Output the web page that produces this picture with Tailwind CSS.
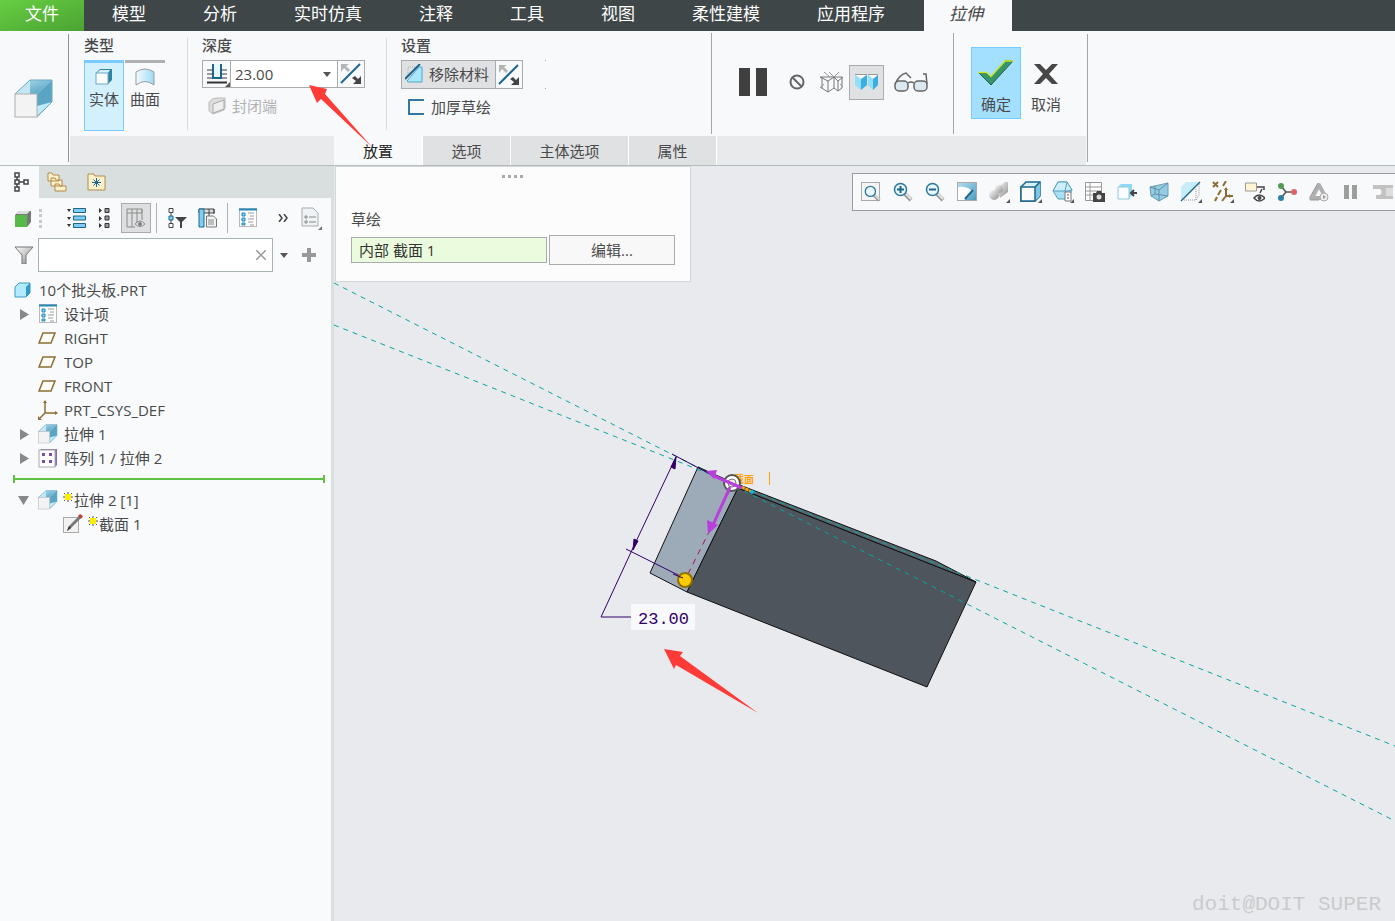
<!DOCTYPE html>
<html lang="zh-CN">
<head>
  <meta charset="UTF-8" />
  <meta name="viewport" content="width=device-width, initial-scale=1.0" />
  <title>10个批头板.PRT - 拉伸</title>
  <script src="https://cdn.jsdelivr.net/npm/@tailwindcss/browser@4"></script>
</head>
<body class="min-h-screen flex flex-col relative overflow-x-hidden bg-[#e9eaee] text-[15px] leading-5 text-[#4a4a4a] font-['Open_Sans','Noto_Sans_CJK_SC',sans-serif]">

  <!-- shared icons -->
  <svg class="absolute w-0 h-0">
    <defs>
      <linearGradient id="sky" x1="0" y1="0" x2="1" y2="1"><stop offset="0" stop-color="#b5e0f2" /><stop offset="1" stop-color="#4a9bbd" /></linearGradient>
      <linearGradient id="pale" x1="0" y1="0" x2="1" y2="0"><stop offset="0" stop-color="#f4fbfe" /><stop offset="1" stop-color="#9ddcf5" /></linearGradient>
      <linearGradient id="grey" x1="0" y1="0" x2="1" y2="1"><stop offset="0" stop-color="#ffffff" /><stop offset="1" stop-color="#8d8d8d" /></linearGradient>
    </defs>
    <symbol id="extrude" viewBox="0 0 40 40">
      <path d="M1 15 16 1h22L23 15z" fill="url(#sky)" />
      <path d="M16 1 1 15h15z" fill="#c5e6f3" />
      <path d="M38 1v22L23 38V15z" fill="#5ba5c4" />
      <path d="m23 37 15-14-15 4z" fill="#bfeaf9" />
      <path d="M1 15 16 1h22v22L23 38" fill="none" stroke="#6fa9c2" />
      <rect x="1" y="15" width="22" height="23" fill="#f3f3f3" stroke="#b0b0b0" />
    </symbol>
    <symbol id="flip" viewBox="0 0 22 22">
      <path d="M1 1h8L6 3l4 4-2 2-4-4-3 4z" fill="#b4b4b4" />
      <path d="M21 21h-8l3-3-4-3 3-2 3 3 3-3z" fill="#444" />
      <path d="M1 20 20 1" stroke="#1c668c" stroke-width="2" />
    </symbol>
    <symbol id="design" viewBox="0 0 18 20">
      <rect x=".5" y=".5" width="17" height="18" fill="#fff" stroke="#b9b9b9" />
      <path d="M0 1.500h18" stroke="#2389b8" stroke-width="2" />
      <path d="M3 5h3v3H3zM3 10h3v3H3zM3 15h3v2H3z" fill="#7ed0f5" stroke="#2389b8" />
      <path d="M9 5h6M11 8h4M9 11h6M9 14h5M11 17h4" stroke="#9a9a9a" />
    </symbol>
    <symbol id="plane" viewBox="0 0 18 12"><path d="M5 1h12l-4 10H1z" fill="#fffdf8" stroke="#8c6d35" stroke-width="1.500" /></symbol>
    <symbol id="spark" viewBox="0 0 10 10">
      <path d="M1 1l8 8M9 1 1 9M5 0v10M0 5h10" stroke="#555" /><rect x="2" y="2" width="6" height="6" fill="#ffee00" />
    </symbol>
    <symbol id="lens" viewBox="0 0 20 20">
      <path d="m12 12 6 6" stroke="#9c9c9c" stroke-width="4" /><path d="m13 12 5 5" stroke="#e6e6e6" stroke-width="2" />
      <circle cx="7.500" cy="7.500" r="6" fill="#e8f7fd" stroke="#2b7797" stroke-width="1.500" />
    </symbol>
    <symbol id="corner" viewBox="0 0 4 4"><path d="M4 0v4H0z" fill="#555" /></symbol>
  </svg>

  <nav class="flex h-[31px] bg-[#3e4647] text-[17px] leading-[27px] text-white">
    <a href="#" class="w-[84px] text-center bg-gradient-to-br from-[#67cf43] to-[#4ba332]">文件</a>
    <div class="flex gap-[57px] pl-7">
      <a href="#">模型</a><a href="#">分析</a><a href="#">实时仿真</a><a href="#">注释</a><a href="#">工具</a><a href="#">视图</a><a href="#">柔性建模</a><a href="#">应用程序</a>
    </div>
    <a href="#" class="ml-[39px] w-[88px] pr-1 text-center italic bg-[#f8f9fb] text-[#444]">拉伸</a>
  </nav>

  <header class="flex h-[135px] bg-[#f8f9fb] border-b border-[#b3bdbf]">
    <div class="w-[68px] pt-12 pl-[14px]"><svg class="size-10"><use href="#extrude" /></svg></div>
    <div class="w-px my-[3px] bg-[#8e9596]"></div>
    <div class="w-[1018px] flex flex-col">
      <div class="flex h-[105px]">
        <section class="w-[118px] pl-[15px] pt-1">
          <h2 class="font-medium h-[25px] leading-5">类型</h2>
          <div class="flex gap-px">
            <button class="w-10 h-[71px] pt-[5px] flex flex-col items-center border border-t-3 border-[#7accff] bg-[#d3f0ff]">
              <svg class="w-[18px] h-[18px] mb-[3px]" viewBox="0 0 18 18"><path d="M1 5 5 1h12v11l-4 4z" fill="#2f83a4" /><path d="M2 5 5 2h10l-2 3z" fill="#d5f1fb" /><rect x="1" y="5" width="12" height="11" fill="#fbfdfe" stroke="#6aaac4" /></svg>
              <span>实体</span>
            </button>
            <button class="w-10 h-[71px] pt-[5px] flex flex-col items-center border-t-3 border-[#b0b0b0]">
              <svg class="w-5 h-[18px] mb-[3px]" viewBox="0 0 20 18"><path d="M1 4Q10-2 19 4v13Q10 10 1 17z" fill="url(#pale)" stroke="#9b9b9b" /></svg>
              <span>曲面</span>
            </button>
          </div>
        </section>
        <div class="w-px h-[92px] mt-[7px] bg-[#d9dbdd]"></div>

        <section class="w-[198px] pl-[14px] pt-1">
          <h2 class="font-medium h-[25px] leading-5">深度</h2>
          <div class="flex w-[163px] h-7 border border-[#a9abad] bg-white">
            <button aria-label="深度选项" class="w-7 relative flex items-center justify-center border-r border-[#a9abad] bg-[#f8f9fb]">
              <svg class="w-5 h-5" viewBox="0 0 20 20"><path d="M0 6h20M0 10h20M0 14h20" stroke="#999" stroke-width="2" /><path d="M5 0h10v14H5z" fill="#e7f7fd" /><path d="M6 0v14h8V0" fill="none" stroke="#1c668c" stroke-width="2" /><path d="M0 18.500h20" stroke="#333" stroke-width="2" /></svg>
              <svg class="absolute right-0 bottom-0 size-[5px]"><use href="#corner" /></svg>
            </button>
            <input aria-label="深度" value="23.00" class="w-[92px] pl-1 outline-none bg-white" />
            <button aria-label="深度列表" class="w-[14px]"><svg class="w-2 h-[5px]" viewBox="0 0 8 5"><path d="M0 0h8L4 5z" fill="#555" /></svg></button>
            <button aria-label="反向深度" class="flex-1 flex items-center justify-center border-l border-[#a9abad] bg-[#f8f9fb]"><svg class="size-[22px]"><use href="#flip" /></svg></button>
          </div>
          <button disabled class="flex items-center gap-[6px] mt-2 pl-[6px] text-[#b2b2b2]">
            <svg class="w-[18px] h-[18px]" viewBox="0 0 18 18"><path d="M1 5Q4 1 9 1h8v10l-1 2-11 4-4-3z" fill="#ddd" stroke="#bbb" /><path d="M5 7 16 3v9L5 16z" fill="#eee" stroke="#aaa" /></svg>封闭端
          </button>
        </section>
        <div class="w-px h-[92px] mt-[7px] bg-[#d9dbdd]"></div>

        <section class="w-[324px] pl-[14px] pt-1">
          <h2 class="font-medium h-[25px] leading-5">设置</h2>
          <div class="flex">
            <div class="flex w-[122px] h-[29px] border border-[#a9abad]">
              <button class="w-[93px] flex items-center gap-[6px] pl-[3px] pb-[2px] bg-[#e0e1e3]">
                <svg class="w-[18px] h-5" viewBox="0 0 18 20"><path d="M3 3h8v8H3z" fill="none" stroke="#aaa" stroke-dasharray="1 1" /><path d="M2 17 14 3h3v15H3z" fill="#a9e7ff" stroke="#56a6c9" /><path d="M0 15 15 0" stroke="#1c668c" stroke-width="2" /></svg>移除材料
              </button>
              <button aria-label="反向材料侧" class="flex-1 flex items-center justify-center border-l border-[#a9abad]"><svg class="size-[22px]"><use href="#flip" /></svg></button>
            </div>
            <div class="ml-[22px] flex flex-col justify-between"><i class="size-px bg-[#a9abad]"></i><i class="size-px bg-[#a9abad]"></i></div>
          </div>
          <button class="flex items-center gap-[6px] mt-2 pl-[7px]"><svg class="w-[17px] h-4" viewBox="0 0 17 16"><path d="M16 1H1v14h15" fill="none" stroke="#33789a" stroke-width="2" /></svg>加厚草绘</button>
        </section>
        <div class="w-px my-[2px] bg-[#a3a6a8]"></div>

        <section class="w-[241px] pl-[27px] pb-[3px] flex items-center">
          <button aria-label="暂停"><svg class="w-7 h-7" viewBox="0 0 28 28"><path d="M0 0h11v28H0zM17 0h11v28H17z" fill="#404040" /></svg></button>
          <button aria-label="无预览" class="ml-[22px]"><svg class="size-4" viewBox="0 0 16 16"><circle cx="8" cy="8" r="6.500" fill="none" stroke="#666" stroke-width="2" /><path d="m3 3 10 10" stroke="#666" stroke-width="2" /></svg></button>
          <button aria-label="分离" class="ml-[14px]"><svg class="w-[25px] h-[22px]" viewBox="0 0 25 22" fill="none" stroke="#777"><path d="M1 6h22M1 6l8 4 6-4 4 4 5-4M1 16l8 5 6-4 4 3 4-3M9 10v11M19 10v10M15 6v11M23 6v11M3 6v11" /><path d="m5 1 6 5M10 1l5 5M20 1l-5 5M1 17l4-4M21 13l3 3" stroke="#999" /></svg></button>
          <button aria-label="连接" class="ml-[5px] w-[35px] h-[35px] flex items-center justify-center border border-[#a9abad] bg-[#e0e1e3]">
            <svg class="w-[23px] h-4" viewBox="0 0 23 16"><path d="M0 0h12L6 5zM13 0h10l-5 5z" fill="#fff" /><path d="M0 1 6 5v11L0 11zM13 1l5 4v11l-5-5z" fill="#92defb" /><path d="m6 5 6-4v10l-6 5zM18 5l5-4v10l-5 5z" fill="#38afe0" /><path d="M0 .5h12M13 .5h10" fill="none" stroke="#999" /></svg>
          </button>
          <button aria-label="预览" class="ml-[10px]"><svg class="w-[34px] h-5" viewBox="0 0 34 20" fill="none" stroke="#666" stroke-width="1.500"><rect x="1" y="9" width="13" height="10" rx="4" fill="#dce8ef" /><rect x="20" y="9" width="13" height="10" rx="4" fill="#dce8ef" /><path d="M14 11q3-2 6 0M1 12q4-9 11-11l5 5M33 12l-1-10h-3" /></svg></button>
        </section>
        <div class="w-px my-[2px] bg-[#a3a6a8]"></div>

        <section class="flex pl-[17px] pt-4">
          <button class="w-[50px] h-[72px] pt-3 flex flex-col items-center border border-[#75ccff] bg-[#a3dfff]">
            <svg class="w-9 h-[26px] mb-2" viewBox="0 0 36 26"><path d="M1 13h7l5 4L27 1h8L13 25z" fill="#359769" stroke="#285f48" /><path d="M0 12.500h8.500l4.500 4L27 1h8" fill="none" stroke="#c6e92b" stroke-width="1.500" /></svg>
            <span>确定</span>
          </button>
          <button class="w-[50px] h-[72px] pt-[17px] flex flex-col items-center">
            <svg class="w-[26px] h-5 mb-[10px]" viewBox="0 0 26 20"><path d="M1 0h6l6 6 6-6h6l-9 10 9 10h-6l-6-6-6 6H1l9-10z" fill="#474747" /></svg>
            <span>取消</span>
          </button>
        </section>
      </div>

      <div class="flex h-[29px] ml-px mr-px bg-[#e9eaeb] leading-[30px]">
        <div class="w-[264px]"></div>
        <button class="w-[88px] bg-[#f8f9fb] text-[#222]">放置</button>
        <button class="w-[88px] border-l border-white bg-[#e0e1e3]">选项</button>
        <button class="w-[118px] border-l border-white bg-[#e0e1e3]">主体选项</button>
        <button class="w-[89px] border-x border-white bg-[#e0e1e3]">属性</button>
      </div>
    </div>
    <div class="w-px my-[3px] bg-[#a3a6a8]"></div>
  </header>

  <main class="flex flex-1">
    <aside class="w-[334px] shrink-0 bg-[#f8fafc] border-r-3 border-[#d9dfdf]">
      <div class="flex h-8 bg-[#d9dfdf]">
        <button aria-label="模型树" class="w-[39px] pl-1 flex items-center justify-center bg-[#f8fafc]">
          <svg class="w-[15px] h-5" viewBox="0 0 15 20" fill="none" stroke="#444" stroke-width="1.500"><path d="M1 1h4v4H1zM1 8h4v4H1zM1 15h4v4H1zM10 8h4v4h-4zM3 5v3M3 12v3M5 10h5" /></svg>
        </button>
        <button aria-label="文件夹浏览器" class="w-9 flex items-center justify-center">
          <svg class="w-5 h-5" viewBox="0 0 20 20" fill="#fdf0cc" stroke="#b28d48"><path d="M1 1h4l1 2h6v6H1zM4 6h4l1 2h6v6H4zM8 12h4l1 2h6v5H8z" /></svg>
        </button>
        <button aria-label="收藏夹" class="w-[43px] flex items-center justify-center">
          <svg class="w-[19px] h-[18px]" viewBox="0 0 19 18"><path d="M1 3V1h6l1 2h10v14H1z" fill="#fdf0cc" stroke="#b28d48" /><path d="M9.500 5v9M5 9.500h9M6.500 6.500l6 6M12.500 6.500l-6 6" stroke="#1c668c" /></svg>
        </button>
      </div>

      <div class="flex items-center h-10 pl-[15px]">
        <button aria-label="模型"><svg class="w-4 h-[17px]" viewBox="0 0 16 17"><path d="M0 5 4 1h12v11l-4 5V5z" fill="#777" /><path d="m1 4 3-3h11l-3 3z" fill="#ddd" /><path d="M0 5h12v12H0z" fill="#57b947" /></svg></button>
        <svg class="w-1 h-[19px] ml-2" viewBox="0 0 4 19"><path d="M0 0h3v3H0zM0 5h3v3H0zM0 11h3v3H0zM0 16h3v3H0z" fill="#c7c9ca" /></svg>
        <button aria-label="全部展开" class="ml-6"><svg class="w-[19px] h-5" viewBox="0 0 19 20"><path d="M0 1h4L2 4zM0 9h4l-2 3zM0 16h4l-2 3z" fill="#333" /><path d="M6.500.5h12v4h-12zM6.500 8h12v4h-12zM6.500 15.500h12v4h-12z" fill="#80cdf1" stroke="#1c668c" /></svg></button>
        <button aria-label="全部折叠" class="ml-[13px]"><svg class="w-[11px] h-5" viewBox="0 0 11 20"><path d="m0 0 3 2.500L0 5zM0 8l3 2.500L0 13zM0 15l3 2.500L0 20z" fill="#333" /><path d="M6 .5h4v4H6zM6 8h4v4H6zM6 15.500h4v4H6z" fill="#999" stroke="#333" /></svg></button>
        <button aria-label="树列" class="ml-[11px] size-[30px] flex items-center justify-center border border-[#a9abad] bg-[#dedfe0]"><svg class="w-5 h-5" viewBox="0 0 20 20" fill="none" stroke="#8b8b8b"><path d="M1 1h15v4H1zM1 5v14h5V5M6 1v4M11 1v14M16 1v11M6 19h3" /><path d="M9 16q5-6 10 0-5 5-10 0z" /><circle cx="14" cy="16" r="1.500" fill="#777" /></svg></button>
        <div class="w-px h-[30px] ml-[5px] bg-[#b1b3b4]"></div>
        <button aria-label="树过滤器" class="ml-[11px]"><svg class="w-[19px] h-5" viewBox="0 0 19 20"><path d="M1 .5h4v4H1zM1 15.500h4v4H1zM3 4v4M3 12v4" fill="#fff" stroke="#444" /><path d="M1 8h4v4H1z" fill="#80cdf1" stroke="#1c668c" /><path d="M7 9h12l-5 5v6h-2v-6z" fill="#444" /></svg></button>
        <button aria-label="列设置" class="ml-[11px]"><svg class="w-5 h-5" viewBox="0 0 20 20"><path d="M1 1h15v4H1zM11 1v7M16 1v5" fill="#ddd" stroke="#444" /><path d="M1 1h5v18H1z" fill="#80cdf1" stroke="#1c668c" /><path d="M8.500 8h7l3 3v8h-10z" fill="#f3f3f3" stroke="#777" /><path d="M10 12h6M10 14h6M10 16h6" stroke="#888" /></svg></button>
        <div class="w-px h-[30px] ml-[9px] bg-[#b1b3b4]"></div>
        <button aria-label="设计项" class="ml-[11px]"><svg class="w-[18px] h-5"><use href="#design" /></svg></button>
        <button aria-label="更多" class="ml-[21px]"><svg class="w-[10px] h-2" viewBox="0 0 10 8"><path d="m1 0 3 4-3 4M6 0l3 4-3 4" fill="none" stroke="#444" stroke-width="1.500" /></svg></button>
        <button aria-label="显示" class="ml-[13px]"><svg class="w-[21px] h-[23px]" viewBox="0 0 21 23"><path d="M1 1h11l5 5v13H1z" fill="#f0f3f5" stroke="#aaa" /><path d="M4 9h2v2H4zM4 14h2v2H4z" fill="none" stroke="#888" /><path d="M8 10h7M8 15h7" stroke="#888" /><path d="M21 19v4h-4z" fill="#777" /></svg></button>
      </div>

      <div class="flex items-center h-[34px] pl-[14px]">
        <svg class="w-5 h-[18px]" viewBox="0 0 20 18"><path d="M1 1h18l-7 8v9H8V9z" fill="url(#grey)" stroke="#777" /></svg>
        <div class="flex items-center ml-1 w-[235px] h-[34px] border border-[#a6b4b6] bg-white">
          <input type="text" aria-label="搜索" class="flex-1 min-w-0 h-full px-2 outline-none" />
          <button aria-label="清除" class="mr-[6px]"><svg class="size-[10px]" viewBox="0 0 10 10"><path d="m0 0 10 10M10 0 0 10" stroke="#999" stroke-width="1.500" /></svg></button>
        </div>
        <button aria-label="搜索选项" class="ml-[7px]"><svg class="w-2 h-[5px]" viewBox="0 0 8 5"><path d="M0 0h8L4 5z" fill="#555" /></svg></button>
        <button aria-label="添加" class="ml-[14px]"><svg class="size-[14px]" viewBox="0 0 14 14"><path d="M5 0h4v5h5v4H9v5H5V9H0V5h5z" fill="#999" /></svg></button>
      </div>

      <ul class="mt-[6px] [&>li]:flex [&>li]:items-center [&>li]:h-6 pl-[14px]">
        <li><svg class="w-[17px] h-4 mr-2" viewBox="0 0 17 16"><path d="M1 5 5 1h11v10l-4 4H1z" fill="#b2eaff" stroke="#3f9cc4" /><path d="M12 5v10l4-4V1z" fill="#3198c8" /></svg>10个批头板.PRT</li>
        <li><svg class="w-[9px] h-[11px] ml-[6px] mr-[10px]" viewBox="0 0 9 11"><path d="m0 0 9 5.500L0 11z" fill="#888" /></svg><svg class="w-[18px] h-5 mr-[7px]"><use href="#design" /></svg>设计项</li>
        <li><svg class="w-[18px] h-3 ml-6 mr-2"><use href="#plane" /></svg>RIGHT</li>
        <li><svg class="w-[18px] h-3 ml-6 mr-2"><use href="#plane" /></svg>TOP</li>
        <li><svg class="w-[18px] h-3 ml-6 mr-2"><use href="#plane" /></svg>FRONT</li>
        <li><svg class="w-5 h-5 ml-6 mr-[6px]" viewBox="0 0 20 20"><path d="M7 2v11h12M7 13l-5 5" fill="none" stroke="#8c6d35" stroke-width="1.500" /><path d="m7 0 2 3H5zM20 13l-3-2v4zM0 20v-4l4 4z" fill="#8c6d35" /></svg>PRT_CSYS_DEF</li>
        <li><svg class="w-[9px] h-[11px] ml-[6px] mr-[9px]" viewBox="0 0 9 11"><path d="m0 0 9 5.500L0 11z" fill="#888" /></svg><svg class="size-5 mr-[6px]"><use href="#extrude" /></svg>拉伸 1</li>
        <li><svg class="w-[9px] h-[11px] ml-[6px] mr-[9px]" viewBox="0 0 9 11"><path d="m0 0 9 5.500L0 11z" fill="#888" /></svg><svg class="size-5 mr-[6px]" viewBox="0 0 20 20"><path d="M1 3 3 1h16v16l-2 2" fill="#8a6bb0" /><rect x="1" y="2" width="16" height="17" fill="#fff" stroke="#aaa" /><path d="M4 5h3v3H4zM11 5h3v3h-3zM4 12h3v3H4zM11 12h3v3h-3z" fill="#7a51a1" /></svg>阵列 1 / 拉伸 2</li>
      </ul>
      <div class="flex items-center h-[18px] ml-[13px] mr-[6px]">
        <i class="w-[2px] h-2 bg-[#5fc244]"></i><i class="flex-1 h-[2px] bg-[#5fc244]"></i><i class="w-[2px] h-2 bg-[#5fc244]"></i>
      </div>
      <ul class="[&>li]:flex [&>li]:items-center [&>li]:h-6 pl-[14px]">
        <li><svg class="w-[11px] h-[9px] ml-1 mr-[9px]" viewBox="0 0 11 9"><path d="M0 0h11L5.500 9z" fill="#888" /></svg><svg class="size-5 mr-[5px]"><use href="#extrude" /></svg><svg class="size-[10px] mb-[7px] mr-px"><use href="#spark" /></svg>拉伸 2 [1]</li>
        <li><svg class="size-5 ml-[49px] mr-[5px]" viewBox="0 0 20 20"><rect x=".5" y="3.500" width="15" height="15" fill="#f2f2f2" stroke="#aaa" /><path d="m4 17 2-5L16 2l2 2L8 14z" fill="#777" /><path d="m6 12 2 2-4 3z" fill="#333" /><path d="m15 2 2-2 3 2-2 3z" fill="#b8433c" /></svg><svg class="size-[10px] mb-[7px] mr-px"><use href="#spark" /></svg>截面 1</li>
      </ul>
    </aside>

    <div class="flex-1 relative overflow-hidden min-h-[755px]">
      <!-- model view -->
      <svg class="absolute left-0 top-0 w-[1061px] h-[755px]" viewBox="334 166 1061 755">
        <path d="M698 467 650 573l37 19 51-104z" fill="#9dabb8" stroke="#111" />
        <path d="m738 488 238 94-49 105-240-95z" fill="#4e555c" stroke="#111" />
        <path d="m732 482 204 79 40 21-238-94z" fill="#5b656d" stroke="#111" />
        <path d="m698 467 36 16" stroke="#111" />
        <path d="m334 283 1061 538M334 325l1061 421" stroke="#09a59d" stroke-dasharray="5 5" />
        <g fill="none" stroke="#330066">
          <path d="m672 454 38 20M676 457 632 550 601 617h31M626 549l56 28" />
          <path d="m676 457-5 10 4 2zM633 550l5-9-4-2z" fill="#330066" />
        </g>
        <path d="m730 490-43 86" stroke="#a90f54" stroke-dasharray="6 5" />
        <circle cx="685" cy="580" r="7" fill="#ffcb00" stroke="#8f7300" stroke-width="2" />
        <path d="m673 574 10 4" stroke="#330066" />
        <text x="734" y="483" font-size="10" font-weight="bold" fill="#ffa000">截面</text>
        <path d="M769.500 472v13" stroke="#ffa000" />
        <circle cx="732" cy="483" r="8" fill="#fff" stroke="#555" stroke-width="2" />
        <circle cx="732" cy="483" r="4" fill="#eee" stroke="#777" />
        <path d="m742 487 10 5" stroke="#ffa000" stroke-width="3" stroke-dasharray="3 1" />
        <circle cx="752" cy="492" r="2" fill="#0bb5e0" />
        <path d="m742 488-28-12M730 487l-17 38" stroke="#b83fdc" stroke-width="3" />
        <path d="m706 471 11-1-3 9zM708 534l-1-14 11 5z" fill="#b83fdc" />
        <rect x="631" y="604" width="64" height="26" fill="#f8f9fb" />
        <text x="638" y="624" font-size="17" fill="#330066" class="font-['Liberation_Mono',monospace]">23.00</text>
        <path d="m664 649 19 3-3 4 78 57-82-48-2 4z" fill="#ff3b38" />
      </svg>

      <!-- placement panel -->
      <section class="absolute left-px top-0 w-[356px] h-[116px] px-[15px] pt-2 bg-[#fcfcfc] border border-[#d3d7d9]">
        <svg class="w-[22px] h-[3px] mx-auto" viewBox="0 0 22 3"><path d="M0 0h3v3H0zM6 0h3v3H6zM12 0h3v3h-3zM18 0h3v3h-3z" fill="#aaa" /></svg>
        <label for="sketch" class="block mt-[31px]">草绘</label>
        <div class="flex items-center gap-[2px] mt-[6px]">
          <input id="sketch" value="内部 截面 1" class="w-[196px] h-[26px] px-[7px] pb-[2px] bg-[#eafcdd] border border-[#a9abad] outline-none text-[#333]" />
          <button class="w-[126px] h-[30px] border border-[#a9abad] bg-[#f8f8f8]">编辑...</button>
        </div>
      </section>

      <!-- graphics toolbar -->
      <div class="absolute top-[7px] right-0 w-[543px] h-[38px] pl-[2px] flex items-center bg-[#f8f9fb] border border-r-0 border-[#9b9d9f] overflow-hidden [&>button]:w-8 [&>button]:shrink-0 [&>button]:flex [&>button]:justify-center [&>button]:relative">
        <button aria-label="重新调整"><svg class="size-5" viewBox="0 0 20 20"><rect x=".5" y=".5" width="18" height="18" fill="#f5f5f5" stroke="#aaa" /><svg x="3" y="3" width="17" height="17"><use href="#lens" /></svg></svg></button>
        <button aria-label="放大"><svg class="size-5" viewBox="0 0 20 20"><use href="#lens" /><path d="M4 7.500h7M7.500 4v7" stroke="#1c668c" stroke-width="2" /></svg></button>
        <button aria-label="缩小"><svg class="size-5" viewBox="0 0 20 20"><use href="#lens" /><path d="M4 7.500h7" stroke="#1c668c" stroke-width="2" /></svg></button>
        <button aria-label="重画"><svg class="size-5" viewBox="0 0 20 20"><rect x=".5" y=".5" width="19" height="18" fill="url(#sky)" stroke="#aaa" /><path d="M1 5q9-1 14 4-3 7-8 9H1z" fill="#fff" /><path d="m8 17 8-9" stroke="#1c668c" stroke-width="2" /></svg></button>
        <button aria-label="渲染"><svg class="size-[22px]" viewBox="0 0 22 22"><path d="m9 7 8-6h3v10l-8 6z" fill="url(#grey)" /><circle cx="6" cy="14" r="5" fill="url(#grey)" /><circle cx="11" cy="8" r="4" fill="url(#grey)" /><path d="M22 18v4h-4z" fill="#555" /></svg></button>
        <button aria-label="显示样式"><svg class="size-[22px]" viewBox="0 0 22 22"><path d="M1 6 6 1h14v14l-5 5H1z" fill="#d7f0fa" stroke="#1c668c" stroke-width="1.500" /><path d="M15 6v14l5-5V1z" fill="#7cc8e4" /><path d="M1 6h14v14H1zM15 6l5-5" fill="#fcfcfc" stroke="#1c668c" stroke-width="1.500" /><path d="M22 18v4h-4z" fill="#555" /></svg></button>
        <button aria-label="已保存方向"><svg class="size-[22px]" viewBox="0 0 22 22"><path d="m1 10 5-9h9l5 8-5 9H6z" fill="#a7dff4" stroke="#579fbd" /><path d="m6 1-5 9h14l5-1-5-8z" fill="#cdeefa" stroke="#579fbd" /><path d="m15 1-2 9 2 8" fill="none" stroke="#579fbd" /><path d="M13 11h6v9h-6z" fill="#fff" stroke="#777" /><path d="M15 14h2M15 17h2" stroke="#555" /><path d="M22 18v4h-4z" fill="#555" /></svg></button>
        <button aria-label="视图管理器"><svg class="size-5" viewBox="0 0 20 20"><path d="M.5.5h16v18H.5zM0 5h17M0 9h17M0 13h17M5 0v19" fill="#fff" stroke="#999" /><path d="M8 11h3l1-2h4l1 2h3v9H8z" fill="#444" /><circle cx="14" cy="15" r="2.500" fill="#ddd" /></svg></button>
        <button aria-label="外观"><svg class="size-5" viewBox="0 0 20 20"><path d="M1 5 4 2h11v11l-3 4H1z" fill="#8edaf5" /><path d="M1 5h11v12H1z" fill="#fafdff" stroke="#8fcbe0" /><path d="M20 11h-5M17 8l-3 3 3 3" fill="none" stroke="#444" stroke-width="2" /></svg></button>
        <button aria-label="透视图"><svg class="size-5" viewBox="0 0 20 20"><path d="M1 5 19 1v13l-9 5-8-5z" fill="#93cce3" stroke="#6b9db1" /><path d="m1 5 9 3 9-7M10 8v11M6 4v8l13 2M6 12l-4 2" fill="none" stroke="#5e91a7" /></svg></button>
        <button aria-label="截面"><svg class="size-[22px]" viewBox="0 0 22 22"><path d="M1 6 6 1h13L1 19z" fill="#c8edfa" /><path d="M4 19h12V7M16 19l3-5V3" fill="none" stroke="#999" stroke-dasharray="1 1" /><path d="M1 20 20 1" stroke="#1c668c" stroke-width="1.500" /><path d="M22 18v4h-4z" fill="#555" /></svg></button>
        <button aria-label="基准显示"><svg class="size-[22px]" viewBox="0 0 22 22"><path d="m1 1 5 5M6 1 1 6M14 0l-3 5M9 9l-3 5M5 16l-2 4M14 7v8h7M14 15l-4 5" fill="none" stroke="#8c6d35" stroke-width="2" /><path d="m14 6 2 3h-4zM20 15l-3-2v4z" fill="#8c6d35" /><path d="M22 18v4h-4z" fill="#555" /></svg></button>
        <button aria-label="注释显示"><svg class="size-5" viewBox="0 0 20 20"><path d="M.5 1h11v8H.5z" fill="#fff6d5" stroke="#999" /><path d="M12 5h7v3M17 7l-2 4" fill="none" stroke="#444" stroke-width="1.500" /><path d="M9 16q5-6 11 0-6 6-11 0z" fill="#fff" stroke="#444" stroke-width="1.500" /><circle cx="14.500" cy="16" r="2" fill="#444" /></svg></button>
        <button aria-label="旋转中心"><svg class="size-5" viewBox="0 0 20 20"><path d="m4 4 5 6h7M9 10l-5 6" fill="none" stroke="#555" stroke-width="1.500" /><circle cx="4" cy="4" r="3" fill="#4e9d50" /><circle cx="17" cy="10" r="3" fill="#df6464" /><circle cx="4" cy="16" r="3" fill="#2d7fa5" /></svg></button>
        <button aria-label="仿真"><svg class="size-5" viewBox="0 0 20 20"><path d="M10 3 17 16H3z" fill="none" stroke="#b0b0b0" stroke-width="4" stroke-linejoin="round" /><path d="M9 1 1 15v3h9" fill="none" stroke="#999" /><circle cx="15" cy="15" r="4" fill="#eee" stroke="#aaa" /><path d="m14 13 3 2-3 2z" fill="#999" /></svg></button>
        <button aria-label="暂停仿真"><svg class="size-5" viewBox="0 0 20 20"><path d="M3 3h5v14H3zM11 3h5v14h-5z" fill="#9d9d9d" /></svg></button>
        <button aria-label="停止仿真"><svg class="size-5" viewBox="0 0 20 20"><path d="M0 3h20v14H3v-4h4q3-3 0-6H0z" fill="#c2c2c2" /><path d="M13 6h7v8h-7z" fill="#dedede" /></svg></button>
      </div>

      <p class="absolute right-[14px] bottom-1 text-[21px] leading-6 text-[#c9cacc] font-['Liberation_Mono',monospace]">doit@DOIT SUPER</p>
    </div>
  </main>

  <!-- callout arrow pointing at the depth box -->
  <svg class="absolute left-[309px] top-[85px] w-16 h-[64px] pointer-events-none" viewBox="0 0 64 64"><path d="m0 0 18 4-2 5 47 53L12 14l-4 4z" fill="#ff3b38" /></svg>
</body>
</html>
